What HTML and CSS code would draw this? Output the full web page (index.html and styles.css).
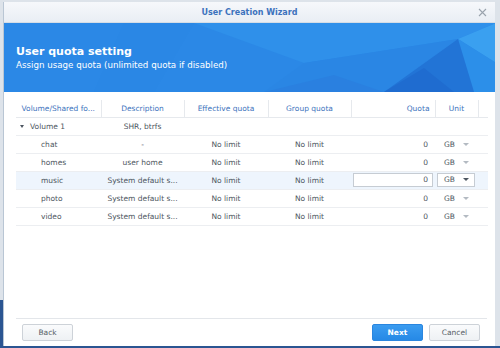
FILE: index.html
```html
<!DOCTYPE html>
<html lang="en">
<head>
<meta charset="utf-8">
<title>User Creation Wizard</title>
<link rel="stylesheet" href="styles.css">
</head>
<body>
<div class="desktop">
  <div class="window">
    <div class="titlebar">
      <span class="title">User Creation Wizard</span>
      <svg class="close" width="9" height="9" viewBox="0 0 9 9"><path d="M1 1L8 8M8 1L1 8" stroke="#9aa3ad" stroke-width="1.1" fill="none"/></svg>
    </div>
    <div class="banner">
      <svg class="banner-art" width="492" height="69" viewBox="0 0 492 69" preserveAspectRatio="none">
        <rect width="492" height="69" fill="#2b88e6"/>
        <polygon points="190,0 492,0 454,16 300,40" fill="#2f90ea"/>
        <polygon points="300,40 454,16 380,69 260,69" fill="#2a86e4"/>
        <polygon points="454,16 492,0 492,40" fill="#3aa0f0"/>
        <polygon points="454,16 492,40 492,69 470,69" fill="#2c8fe9"/>
        <polygon points="454,16 470,69 380,69" fill="#2274d6"/>
        <polygon points="380,69 420,45 450,69" fill="#1f6cd0"/>
        <polygon points="260,69 330,52 380,69" fill="#2a80e0"/>
        <polygon points="120,0 190,0 150,69 90,69" fill="#2a87e5"/>
      </svg>
      <div class="banner-text">
        <div class="banner-title">User quota setting</div>
        <div class="banner-sub">Assign usage quota (unlimited quota if disabled)</div>
      </div>
    </div>
    <div class="content">
      <table class="grid">
        <colgroup>
          <col class="c1"><col class="c2"><col class="c3"><col class="c4"><col class="c5"><col class="c6"><col class="c7">
        </colgroup>
        <thead>
          <tr>
            <th>Volume/Shared fo...</th>
            <th>Description</th>
            <th>Effective quota</th>
            <th>Group quota</th>
            <th class="num">Quota</th>
            <th>Unit</th>
            <th class="last"></th>
          </tr>
        </thead>
        <tbody>
          <tr class="volume">
            <td class="name"><span class="caret"></span>Volume 1</td>
            <td class="center">SHR, btrfs</td>
            <td></td><td></td><td></td><td></td><td></td>
          </tr>
          <tr>
            <td class="share">chat</td>
            <td class="center">-</td>
            <td class="center">No limit</td>
            <td class="center">No limit</td>
            <td class="num">0</td>
            <td class="unit">GB<span class="arrow"></span></td>
            <td></td>
          </tr>
          <tr>
            <td class="share">homes</td>
            <td class="center">user home</td>
            <td class="center">No limit</td>
            <td class="center">No limit</td>
            <td class="num">0</td>
            <td class="unit">GB<span class="arrow"></span></td>
            <td></td>
          </tr>
          <tr class="selected">
            <td class="share">music</td>
            <td class="center">System default s...</td>
            <td class="center">No limit</td>
            <td class="center">No limit</td>
            <td class="edit"><div class="input">0</div></td>
            <td class="edit"><div class="select">GB<span class="arrow dark"></span></div></td>
            <td></td>
          </tr>
          <tr>
            <td class="share">photo</td>
            <td class="center">System default s...</td>
            <td class="center">No limit</td>
            <td class="center">No limit</td>
            <td class="num">0</td>
            <td class="unit">GB<span class="arrow"></span></td>
            <td></td>
          </tr>
          <tr>
            <td class="share">video</td>
            <td class="center">System default s...</td>
            <td class="center">No limit</td>
            <td class="center">No limit</td>
            <td class="num">0</td>
            <td class="unit">GB<span class="arrow"></span></td>
            <td></td>
          </tr>
        </tbody>
      </table>
    </div>
    <div class="footer">
      <button class="btn">Back</button>
      <div class="spacer"></div>
      <button class="btn primary">Next</button>
      <button class="btn">Cancel</button>
    </div>
  </div>
</div>
</body>
</html>
```

FILE: styles.css
```css
* { box-sizing: border-box; }

html, body {
  margin: 0;
  padding: 0;
}

body {
  width: 500px;
  height: 348px;
  overflow: hidden;
  font-family: "DejaVu Sans", Verdana, sans-serif;
  background:
    linear-gradient(#2b5592, #2b5592) 0 300px / 3px 48px no-repeat,
    linear-gradient(#2b5592, #2b5592) 0 346px / 500px 2px no-repeat,
    #dde3ea;
}

.desktop {
  padding: 2px 5px 0 3px;
}

.window {
  width: 492px;
  height: 344px;
  background: #ffffff;
  display: flex;
  flex-direction: column;
  border-left: 1px solid #b9c6d4;
}

.titlebar {
  height: 21px;
  flex: none;
  display: flex;
  align-items: center;
  justify-content: center;
  position: relative;
  background: linear-gradient(to bottom, #f6f8fb, #e9eef4);
  border-bottom: 1px solid #d5dde6;
}

.title {
  font-weight: bold;
  font-size: 8px;
  color: #3c72bd;
}

.close {
  position: absolute;
  right: 8px;
  top: 6px;
}

.banner {
  height: 69px;
  flex: none;
  position: relative;
  overflow: hidden;
  display: flex;
  flex-direction: column;
  justify-content: center;
  padding: 0 0 0 12px;
}

.banner-art {
  position: absolute;
  left: 0;
  top: 0;
}

.banner-text {
  position: relative;
  color: #ffffff;
}

.banner-title {
  font-weight: bold;
  font-size: 11px;
  line-height: 13px;
}

.banner-sub {
  font-size: 8.7px;
  line-height: 12px;
  margin-top: 1px;
}

.content {
  flex: 1;
  padding: 8px 8px 0 12px;
}

.grid {
  border-collapse: collapse;
  table-layout: fixed;
  width: 472px;
  font-size: 7.5px;
  color: #4d5660;
}

.c1 { width: 85px; }
.c2 { width: 83px; }
.c3 { width: 84px; }
.c4 { width: 83px; }
.c5 { width: 84px; }
.c6 { width: 43px; }
.c7 { width: 10px; }

.grid th {
  height: 17px;
  font-weight: normal;
  color: #3d73bd;
  text-align: center;
  border-right: 1px solid #e6e9ed;
  border-bottom: 1px solid #e6e9ed;
  padding: 0 4px;
  white-space: nowrap;
  overflow: hidden;
}

.grid th.last { border-right: none; }

.grid th.num {
  text-align: right;
  padding-right: 5px;
}

.grid td {
  height: 18px;
  padding: 0 4px;
  border-bottom: 1px solid #eceef1;
  white-space: nowrap;
  overflow: hidden;
}

.grid td.center { text-align: center; }

.grid td.num {
  text-align: right;
  padding-right: 7px;
}

.grid td.name { padding-left: 4px; }

.caret {
  display: inline-block;
  width: 0;
  height: 0;
  border-left: 2.5px solid transparent;
  border-right: 2.5px solid transparent;
  border-top: 3px solid #4d5660;
  margin-right: 6px;
  vertical-align: 1px;
}

.grid td.share { padding-left: 25px; }

.grid td.unit { padding-left: 9px; }

.arrow {
  display: inline-block;
  width: 0;
  height: 0;
  border-left: 3px solid transparent;
  border-right: 3px solid transparent;
  border-top: 3px solid #b3bac2;
  margin-left: 8px;
  vertical-align: 1px;
}

.arrow.dark { border-top-color: #4d5660; }

.selected td { background: #eef5fd; }

.grid td.edit { padding: 0 2px; }

.input {
  height: 14px;
  background: #ffffff;
  border: 1px solid #c6ccd3;
  text-align: right;
  padding-right: 4px;
  line-height: 12px;
}

.select {
  height: 14px;
  width: 38px;
  background: #ffffff;
  border: 1px solid #c6ccd3;
  padding-left: 6px;
  line-height: 12px;
}

.footer {
  flex: none;
  height: 28px;
  margin: 0 8px 0 12px;
  border-top: 1px solid #e3e6ea;
  display: flex;
  align-items: flex-start;
  padding: 5px 7px 0 6px;
  gap: 6px;
}

.spacer { flex: 1; }

.btn {
  width: 51px;
  height: 17px;
  font-family: "DejaVu Sans", Verdana, sans-serif;
  font-size: 7.5px;
  color: #555d66;
  border: 1px solid #cdd2d8;
  border-radius: 2px;
  background: linear-gradient(to bottom, #fafbfc, #eef1f4);
  padding: 0;
}

.btn.primary {
  background: linear-gradient(to bottom, #3b9cf0, #2689e6);
  border-color: #2a86df;
  color: #ffffff;
  font-weight: bold;
}
```
